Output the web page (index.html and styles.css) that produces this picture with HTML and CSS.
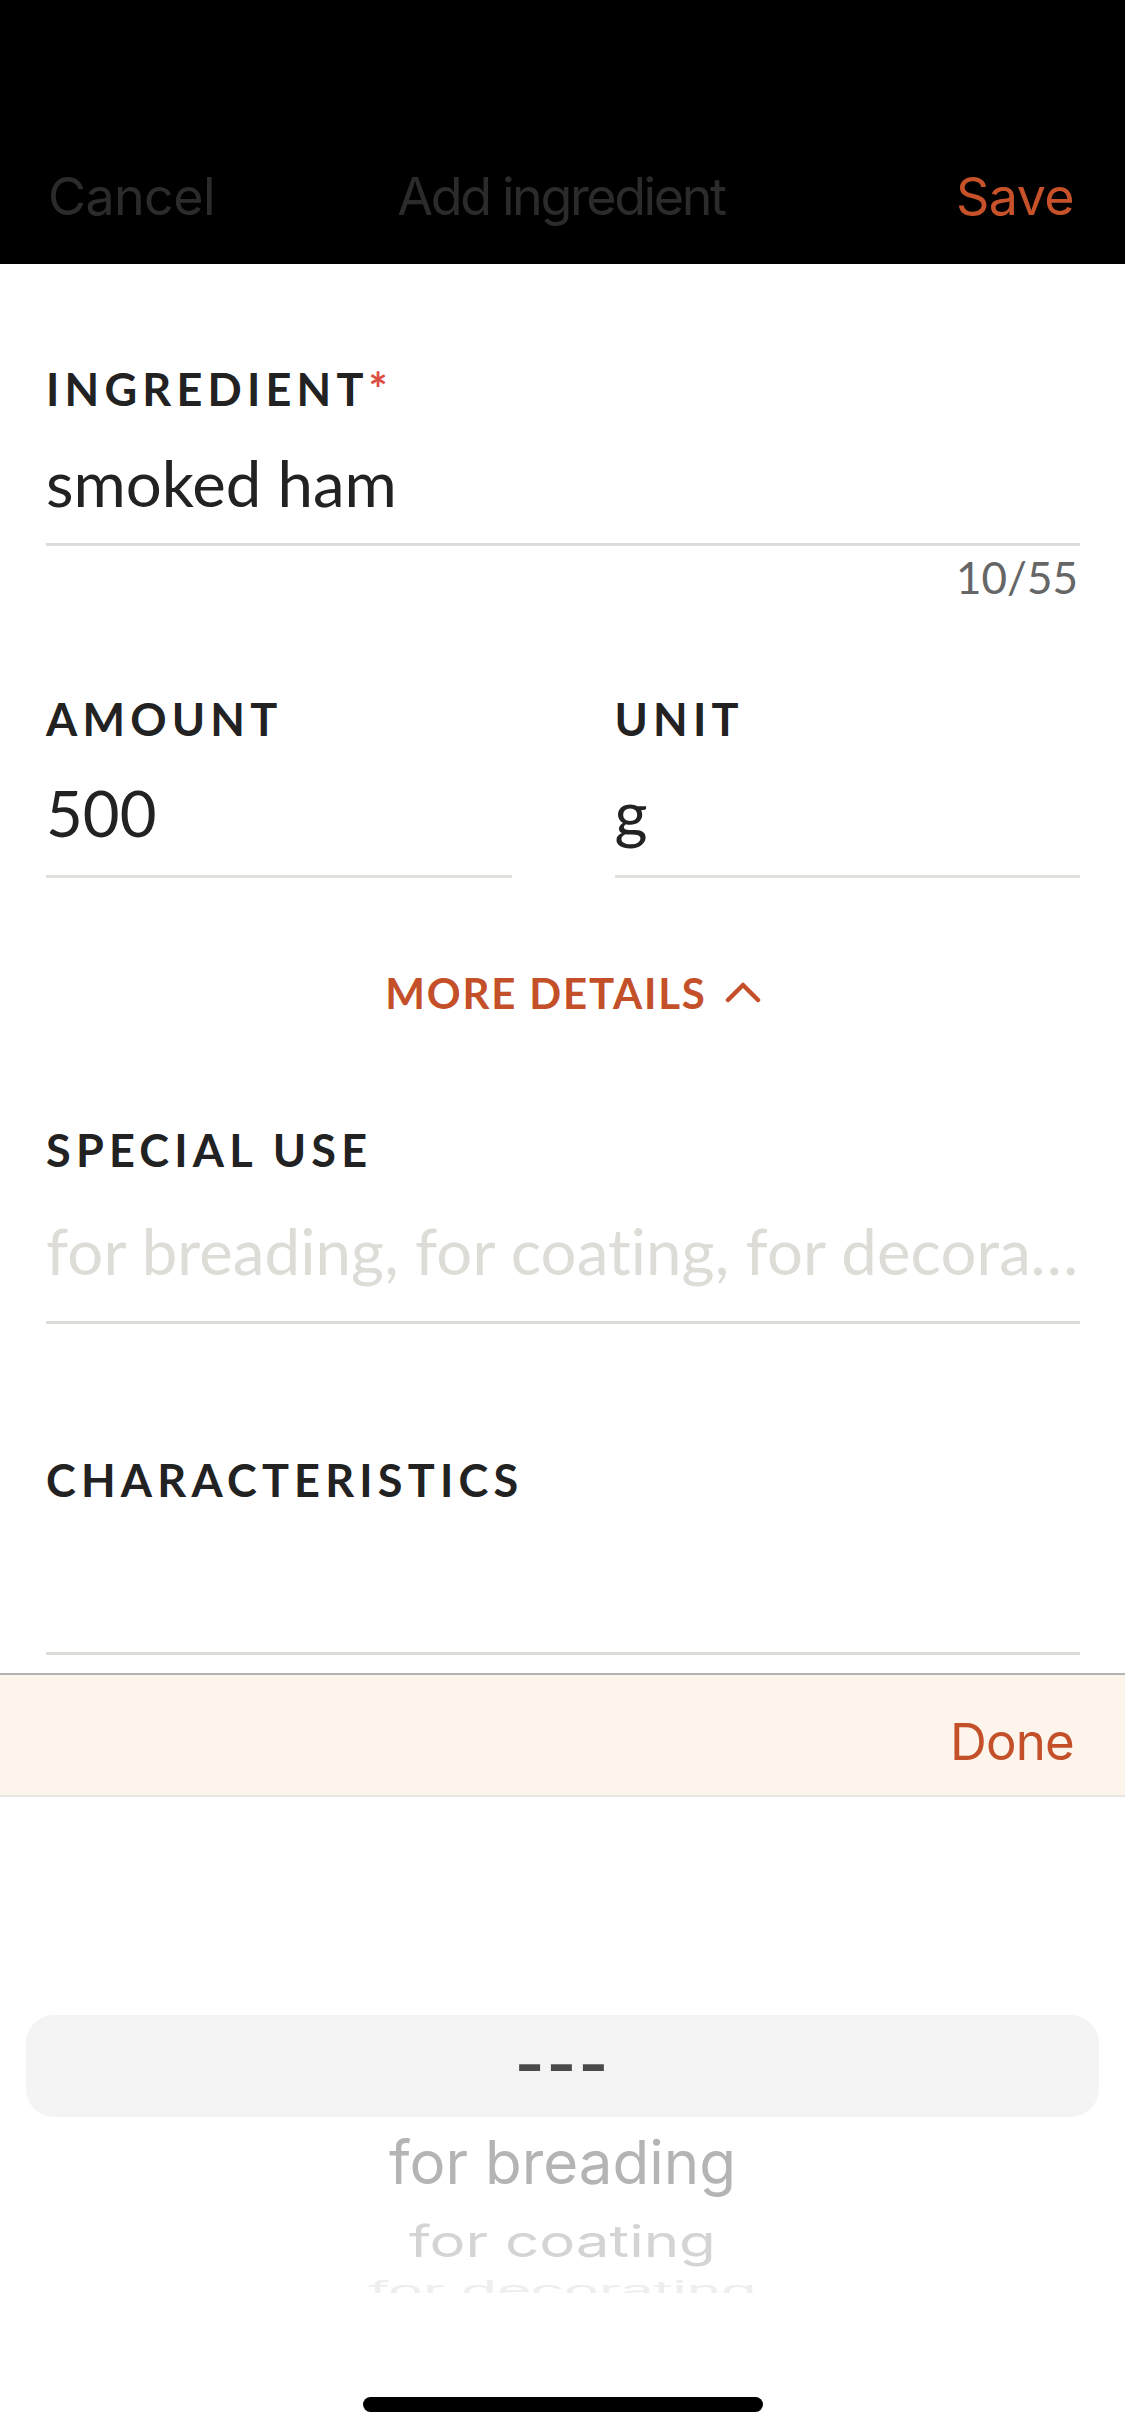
FILE: index.html
```html
<!DOCTYPE html>
<html lang="en">
<head>
<meta charset="utf-8">
<title>Add ingredient</title>
<link rel="stylesheet" href="styles.css">
</head>
<body>
<div class="screen">
  <header class="navbar">
    <span class="nav-btn nav-cancel">Cancel</span>
    <span class="nav-title">Add ingredient</span>
    <span class="nav-btn nav-save">Save</span>
  </header>

  <main class="form">
    <section class="field field-ingredient">
      <div class="label">INGREDIENT<span class="req">*</span></div>
      <div class="input">smoked ham</div>
      <div class="counter">10/55</div>
    </section>

    <section class="row">
      <div class="field">
        <div class="label">AMOUNT</div>
        <div class="input input-short">500</div>
      </div>
      <div class="field">
        <div class="label">UNIT</div>
        <div class="input input-short">g</div>
      </div>
    </section>

    <div class="more">
      <span>MORE DETAILS</span>
      <svg class="chev" width="36" height="22" viewBox="0 0 36 22"><polyline points="3,19 18,4 33,19" fill="none" stroke="#c4502a" stroke-width="4.5" stroke-linecap="round" stroke-linejoin="round"/></svg>
    </div>

    <section class="field field-special">
      <div class="label">SPECIAL USE</div>
      <div class="input input-placeholder">for breading, for coating, for decorating, for garnish</div>
    </section>

    <section class="field field-char">
      <div class="label">CHARACTERISTICS</div>
      <div class="input input-empty"></div>
    </section>
  </main>

  <div class="toolbar">
    <span class="done">Done</span>
  </div>

  <div class="picker">
    <div class="picker-band"><span class="dashes">---</span></div>
    <div class="pick pick-1">for breading</div>
    <div class="pick pick-2">for coating</div>
    <div class="pick pick-3">for decorating</div>
  </div>

  <div class="home-wrap"><div class="home-bar"></div></div>
</div>
</body>
</html>
```

FILE: styles.css
```css
* { box-sizing: border-box; }

html, body {
  margin: 0;
  padding: 0;
  background: #ffffff;
}

body {
  width: 1125px;
  height: 2436px;
  overflow: hidden;
  font-family: Lato, "Open Sans", sans-serif;
  color: #222222;
}

.screen {
  display: flex;
  flex-direction: column;
  width: 1125px;
  height: 2436px;
}

/* Nav bar */
.navbar {
  height: 264px;
  flex: 0 0 264px;
  background: #000000;
  display: grid;
  grid-template-columns: 1fr auto 1fr;
  align-items: start;
  padding: 165px 51px 0 48px;
  font-family: Inter, "Liberation Sans", sans-serif;
  font-size: 52px;
  line-height: 64px;
  letter-spacing: -0.6px;
}

.nav-cancel { color: #2b2b2b; justify-self: start; }
.nav-title { color: #2b2b2b; justify-self: center; letter-spacing: -2.4px; }
.nav-save { color: #c75128; justify-self: end; }

/* Form */
.form {
  height: 1409px;
  flex: 0 0 1409px;
  overflow: hidden;
  padding: 98px 45px 0 46px;
}

.label {
  font-family: Lato, sans-serif;
  font-weight: 700;
  font-size: 45px;
  line-height: 54px;
  letter-spacing: 5.2px;
  color: #222222;
  white-space: nowrap;
}

.req {
  color: #db4f45;
  letter-spacing: 0;
  margin-left: 0;
}

.input {
  margin-top: 29px;
  font-family: Lato, sans-serif;
  font-size: 63.5px;
  line-height: 76px;
  color: #222222;
  padding-bottom: 22px;
  border-bottom: 3px solid #dcdcdc;
  white-space: nowrap;
  overflow: hidden;
  text-overflow: ellipsis;
}

.input-short {
  padding-bottom: 24px;
  border-bottom-color: #e0dfdc;
}

.counter {
  margin-top: 3px;
  text-align: right;
  font-size: 44px;
  line-height: 56px;
  color: #666666;
  padding-right: 2px;
}

.row {
  margin-top: 87px;
  display: grid;
  grid-template-columns: 1fr 1fr;
  column-gap: 103px;
}

.more {
  margin-top: 89px;
  height: 52px;
  display: flex;
  justify-content: center;
  align-items: flex-start;
  gap: 18px;
  padding-left: 20px;
  font-weight: 700;
  font-size: 42px;
  line-height: 52px;
  letter-spacing: 1.8px;
  color: #c4502a;
}

.chev {
  margin-top: 14px;
}

.field-special {
  margin-top: 104px;
}

.field-special .input {
  margin-top: 36px;
  padding-bottom: 32px;
  border-bottom-color: #dedcd8;
  letter-spacing: 0.1px;
}

.input-placeholder {
  color: #dedcd7;
}

.field-char {
  margin-top: 129px;
}

.input-empty {
  margin-top: 0;
  height: 148px;
  padding: 0;
  border-bottom-color: #dedcd8;
}

/* Keyboard accessory toolbar */
.toolbar {
  height: 124px;
  flex: 0 0 124px;
  background: #fdf5eb;
  border-top: 2px solid #b3b3b3;
  border-bottom: 2px solid #e6e6e6;
  display: flex;
  justify-content: flex-end;
  align-items: flex-start;
  padding: 35px 51px 0 0;
}

.done {
  font-family: Inter, "Liberation Sans", sans-serif;
  font-size: 51px;
  line-height: 64px;
  letter-spacing: -0.8px;
  color: #c4502a;
}

/* Picker */
.picker {
  height: 496px;
  flex: 0 0 496px;
  overflow: hidden;
  padding-top: 218px;
  font-family: Inter, "Liberation Sans", sans-serif;
  text-align: center;
}

.picker-band {
  margin: 0 26px 0 26px;
  height: 102px;
  background: #f4f4f4;
  border-radius: 28px;
  display: flex;
  justify-content: center;
  align-items: center;
}

.dashes {
  font-size: 64px;
  font-weight: 600;
  line-height: 64px;
  letter-spacing: 2px;
  color: #4a4a4a;
  margin-top: -4px;
}

.pick {
  font-size: 60px;
  line-height: 72px;
  white-space: nowrap;
}

.pick-1 {
  margin-top: 9px;
  color: #b4b4b4;
}

.pick-2 {
  margin-top: 7px;
  color: #d4d4d4;
  transform: scaleY(0.73);
}

.pick-3 {
  margin-top: -24px;
  color: #eeeeee;
  transform: scale(0.97, 0.4);
}

/* Home indicator */
.home-wrap {
  flex: 1 1 auto;
  display: flex;
  justify-content: center;
  padding-top: 104px;
}

.home-bar {
  width: 400px;
  height: 15px;
  border-radius: 8px;
  background: #000000;
}
```
